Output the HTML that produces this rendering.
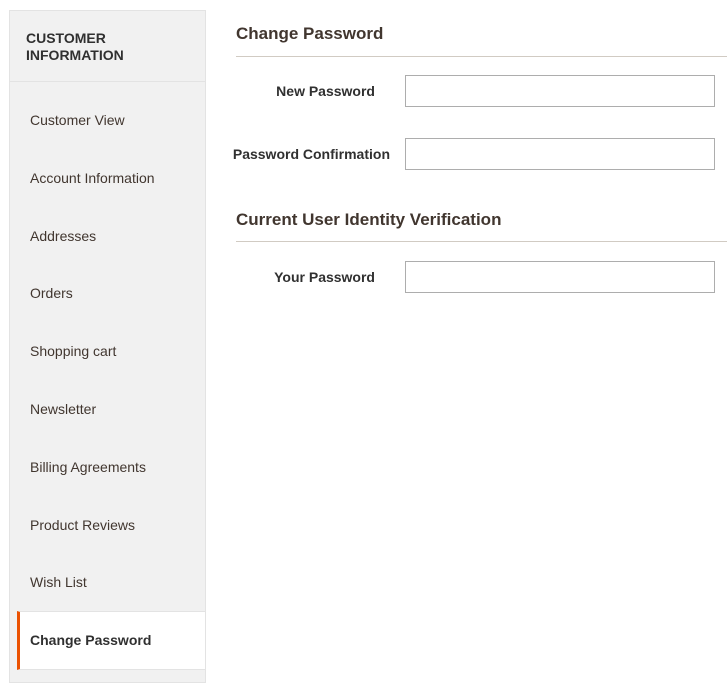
<!DOCTYPE html>
<html><head><style>
body{margin:0;width:727px;height:697px;background:#fff;font-family:"Liberation Sans",sans-serif;color:#303030;position:relative;overflow:hidden}
.side{position:absolute;left:9px;top:10px;width:195px;height:671px;background:#f1f1f1;border:1px solid #e3e3e3}
.hd{position:absolute;left:16px;top:19px;font-weight:bold;font-size:14px;line-height:17px;color:#303030}
.sep{position:absolute;left:0;top:70px;width:195px;height:1px;background:#e3e3e3}
.it{position:absolute;left:20px;font-size:14px;color:#41362f}
.act{position:absolute;left:7px;top:600px;width:188px;height:59px;background:#fff;border-left:3px solid #eb5202;border-bottom:1px solid #e3e3e3;border-top:1px solid #e3e3e3;box-sizing:border-box}
.act span{position:absolute;left:10px;top:20px;font-weight:bold;font-size:14px;color:#303030}
h2{position:absolute;left:236px;margin:0;font-size:17px;font-weight:bold;color:#41362f}
.ln{position:absolute;left:236px;width:491px;height:1px;background:#d1cbc3}
.lb{position:absolute;font-weight:bold;font-size:14px;text-align:right;color:#303030}
.in{position:absolute;left:405px;width:310px;height:32px;border:1px solid #adadad;box-sizing:border-box;background:#fff}
</style></head><body>
<div class="side">
<div class="hd">CUSTOMER<br>INFORMATION</div>
<div class="sep"></div>
<div class="it" style="top:101px">Customer View</div>
<div class="it" style="top:159px">Account Information</div>
<div class="it" style="top:217px">Addresses</div>
<div class="it" style="top:274px">Orders</div>
<div class="it" style="top:332px">Shopping cart</div>
<div class="it" style="top:390px">Newsletter</div>
<div class="it" style="top:448px">Billing Agreements</div>
<div class="it" style="top:506px">Product Reviews</div>
<div class="it" style="top:563px">Wish List</div>
<div class="act"><span>Change Password</span></div>
</div>
<h2 style="top:24px">Change Password</h2>
<div class="ln" style="top:56px"></div>
<div class="lb" style="right:352px;top:83px">New Password</div>
<div class="in" style="top:75px"></div>
<div class="lb" style="right:337px;top:146px">Password Confirmation</div>
<div class="in" style="top:138px"></div>
<h2 style="top:210px">Current User Identity Verification</h2>
<div class="ln" style="top:241px"></div>
<div class="lb" style="right:352px;top:269px">Your Password</div>
<div class="in" style="top:261px"></div>
</body></html>
